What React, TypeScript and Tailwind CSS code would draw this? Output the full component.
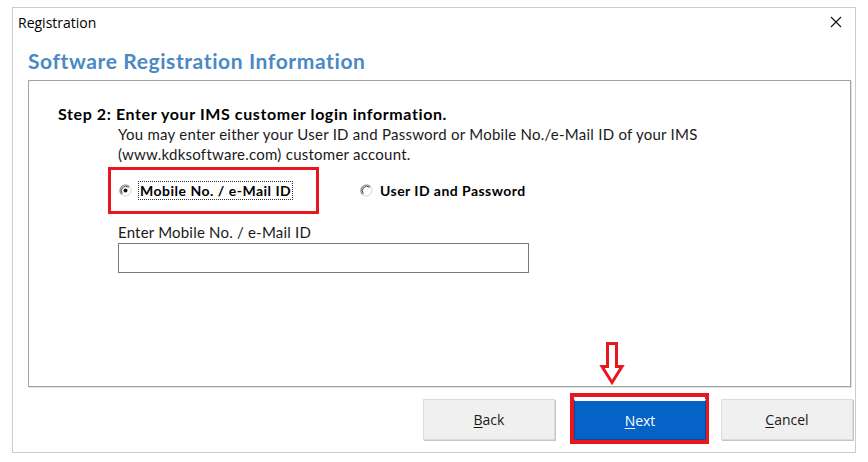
import React from 'react';

const RadioDot: React.FC<{ checked?: boolean }> = ({ checked }) => (
  <svg width="13" height="13" viewBox="0 0 13 13" className="shrink-0">
    <circle cx="6.5" cy="6.5" r="5.5" fill="#fff" stroke="#d4d4d4" strokeWidth="1" />
    <path d="M2.6 10.4 A5.5 5.5 0 0 1 10.4 2.6" fill="none" stroke="#8a8a8a" strokeWidth="1.2" />
    <path d="M3.4 9.6 A4.4 4.4 0 0 1 9.6 3.4" fill="none" stroke="#444" strokeWidth="1" />
    {checked && <circle cx="6.5" cy="6.5" r="2" fill="#111" />}
  </svg>
);

const WinButton: React.FC<{ label: string; primary?: boolean }> = ({ label, primary }) => (
  <button
    className={`w-[132px] h-[41px] text-[14px] ${
      primary
        ? 'bg-[#0563c8] text-white border-t-2 border-t-white border-x border-b border-[#0a4a9a]'
        : 'bg-[#f0f0f0] text-[#1a1a1a] border border-[#dcdcdc] shadow-[1px_1px_0_#c4c4c4]'
    }`}
    style={{ fontFamily: '"Open Sans", "Noto Sans", sans-serif' }}
  >
    <span className="underline underline-offset-2">{label[0]}</span>
    {label.slice(1)}
  </button>
);

export default function App() {
  return (
    <div className="w-[868px] h-[462px] bg-white pt-[7px] pl-[12px]">
      <div
        className="w-[844px] h-[446px] border border-[#cccccc] bg-white flex flex-col"
        style={{ fontFamily: 'Lato, "Open Sans", sans-serif' }}
      >
        {/* title bar */}
        <div className="h-[28px] flex items-center justify-between pl-[5px] pr-[13px]">
          <span className="text-[14px] text-black" style={{ fontFamily: '"Open Sans", "Noto Sans", sans-serif' }}>
            Registration
          </span>
          <svg width="12" height="12" viewBox="0 0 12 12">
            <path d="M1 1 L11 11 M11 1 L1 11" stroke="#111" strokeWidth="1.1" />
          </svg>
        </div>

        <h1 className="ml-[15px] mt-[12px] text-[21px] tracking-[0.6px] leading-[26px] font-bold text-[#4a88c6]">
          Software Registration Information
        </h1>

        {/* panel */}
        <div className="ml-[15px] mr-[4px] mt-[6px] h-[307px] border border-[#a3a3a3] shadow-[1px_1px_0_#e2e2e2] pt-[23px] pl-[29px]">
          <p className="text-[16px] tracking-[0.6px] leading-[20px] font-bold text-black">
            Step 2: Enter your IMS customer login information.
          </p>
          <div className="pl-[60px] text-[15px] tracking-[0.25px] leading-[20px] text-[#1a1a1a]">
            <p>You may enter either your User ID and Password or Mobile No./e-Mail ID of your IMS</p>
            <p>(www.kdksoftware.com) customer account.</p>
          </div>

          <div className="flex items-center mt-[3px] ml-[50px] h-[47px]">
            <div className="relative flex items-center gap-[6px] h-full pl-[11px] w-[211px]">
              <div className="absolute inset-0 border-[3px] border-[#e8161f]" />
              <RadioDot checked />
              <span className="text-[14px] tracking-[0.5px] font-bold text-black border border-dotted border-[#333] px-[1px] leading-[17px]">
                Mobile No. / e-Mail ID
              </span>
            </div>
            <div className="flex items-center gap-[7px] ml-[41px]">
              <RadioDot />
              <span className="text-[14px] tracking-[0.45px] font-bold text-black">User ID and Password</span>
            </div>
          </div>

          <div className="ml-[60px] mt-[8px]">
            <p className="text-[15px] tracking-[0.2px] leading-[20px] text-[#1a1a1a]">Enter Mobile No. / e-Mail ID</p>
            <div className="mt-[1px] w-[411px] h-[30px] border border-[#7a7a7a] bg-white" />
          </div>
        </div>

        {/* buttons */}
        <div className="flex items-start mt-[12px] pl-[410px]">
          <WinButton label="Back" />
          <div className="relative ml-[19px]">
            <div className="absolute -top-[6px] -left-[4px] -right-[3px] -bottom-[4px] border-4 border-[#e8161f]" />
            <svg
              className="absolute left-[25px] -top-[58px]"
              width="28"
              height="46"
              viewBox="0 0 28 46"
            >
              <polygon
                points="8.5,2.5 17.5,2.5 17.5,25.5 23,25.5 13,41.5 3,25.5 8.5,25.5"
                fill="#fff"
                stroke="#e8161f"
                strokeWidth="3"
              />
            </svg>
            <div className="relative">
              <WinButton label="Next" primary />
            </div>
          </div>
          <div className="ml-[15px]">
            <WinButton label="Cancel" />
          </div>
        </div>
      </div>
    </div>
  );
}
